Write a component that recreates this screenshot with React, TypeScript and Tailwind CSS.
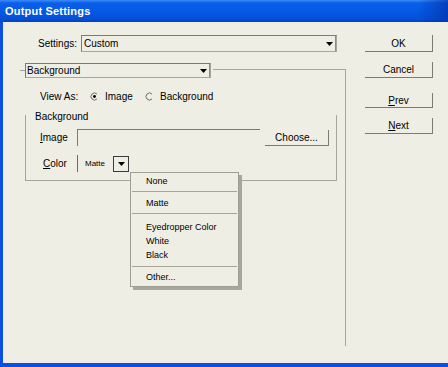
import React from "react";

const F = { fontFamily: '"Liberation Sans", Arial, sans-serif' };

function Tri() {
  return (
    <svg width="7" height="4" viewBox="0 0 7 4" className="block">
      <path d="M0 0 H7 L3.5 4 Z" fill="#000" />
    </svg>
  );
}

function Radio({ on }: { on?: boolean }) {
  return (
    <svg width="9" height="9" viewBox="0 0 9 9" className="block shrink-0">
      <path d="M6.97 2.03 A3.5 3.5 0 1 0 6.97 6.97" fill="none" stroke="#6b6b6b" strokeWidth="1" />
      {on && <circle cx="4.5" cy="4.5" r="1.4" fill="#000" />}
    </svg>
  );
}

function Btn({ children, cls }: { children: React.ReactNode; cls: string }) {
  return (
    <div className={`flex items-center justify-center border-r border-b border-[#7d7b71] text-[10px] text-black ${cls}`}>
      {children}
    </div>
  );
}

function MenuItem({ children, cls }: { children: React.ReactNode; cls?: string }) {
  return <div className={`h-[14px] leading-[14px] pl-[15px] text-[9px] text-black ${cls ?? ""}`}>{children}</div>;
}

function Sep({ cls }: { cls: string }) {
  return <div className={`mx-[1px] h-px bg-[#a7a597] ${cls}`} />;
}

export default function App() {
  return (
    <div className="relative w-[448px] h-[367px] overflow-hidden bg-[#efeee5] flex flex-col" style={F}>
      {/* title bar */}
      <div className="h-[22px] shrink-0 flex items-center pl-[5px] bg-[linear-gradient(to_bottom,#3d8cf9_0px,#0a5fe9_3px,#0558e3_12px,#0450d8_19px,#0340b8_22px)]">
        <div className="relative w-full h-full flex items-center">
          <span className="text-[11px] font-bold text-white tracking-[0.2px]">Output Settings</span>
          <div className="absolute right-0 top-0 h-full w-[30px] bg-[linear-gradient(to_right,rgba(3,50,170,0),rgba(3,50,170,0.7))]" />
        </div>
      </div>
      {/* body */}
      <div className="flex-1 flex flex-col border-l-[3px] border-[#0a4fe0]">
        <div className="flex-1 flex">
          {/* left column */}
          <div className="w-[343px] shrink-0 pt-[13px] flex flex-col">
            {/* settings */}
            <div className="flex h-[17px] items-center">
              <div className="w-[78px] pr-[4px] text-right text-[10px] text-black">Settings:</div>
              <div className="w-[256px] h-[17px] flex items-center border-l border-t border-[#7a7a7a] border-r border-b border-r-[#a8a69a] border-b-[#a8a69a]">
                <span className="flex-1 pl-[2px] text-[10px] text-black">Custom</span>
                <div className="w-[12px] h-full flex items-center justify-center border-r border-[#8e8c82]">
                  <Tri />
                </div>
              </div>
            </div>
            {/* outer group */}
            <div className="mt-[11px] ml-[17px] w-[326px] flex flex-col">
              <div className="flex h-[15px]">
                <div className="w-[5px] mt-[7px] border-t border-[#a7a597]" />
                <div className="w-[186px] h-[15px] flex items-center border-l border-t border-[#7a7a7a] border-r border-b border-r-[#a8a69a] border-b-[#a8a69a]">
                  <span className="flex-1 pl-[1px] text-[10px] text-black leading-[13px]">Background</span>
                  <div className="w-[12px] h-full flex items-center justify-center border-r border-[#8e8c82]">
                    <Tri />
                  </div>
                </div>
                <div className="flex-1 ml-[2px] mt-[6px] border-t border-r border-[#a7a597]" />
              </div>
              <div className="h-[268px] border-r border-[#a7a597] flex flex-col">
                {/* view as */}
                <div className="mt-[11px] h-[14px] flex items-center pl-[20px] text-[10px] text-black">
                  <span className="w-[50px]">View As:</span>
                  <Radio on />
                  <span className="ml-[6px] w-[40px]">Image</span>
                  <Radio />
                  <span className="ml-[6px]">Background</span>
                </div>
                {/* inner group */}
                <div className="mt-[12px] ml-[5px] w-[312px] border-l border-r border-b border-[#a7a597] pb-[8px]">
                  <div className="-mt-[4px] h-[12px] leading-[12px] pl-[9px] text-[10px] text-black">Background</div>
                  <div className="mt-[6px] h-[17px] flex items-center pl-[14px]">
                    <span className="w-[37px] text-[10px] text-black">
                      <span className="underline">I</span>mage
                    </span>
                    <div className="w-[183px] h-[17px] border-l border-t border-[#7a7a7a]" />
                    <Btn cls="ml-[5px] w-[64px] h-[16px]">Choose...</Btn>
                  </div>
                  <div className="mt-[9px] h-[17px] flex items-center pl-[14px]">
                    <span className="w-[37px] pl-[3px] text-[10px] text-black">
                      <span className="underline">C</span>olor
                    </span>
                    <div className="w-[52px] h-[17px] flex items-center">
                      <div className="flex-1 h-full border-l border-[#6a6a6a] flex items-center pl-[7px] text-[8px] text-black">Matte</div>
                      <div className="w-[16px] h-[16px] border border-[#3c3c3c] flex items-center justify-center bg-[#efeee5]">
                        <Tri />
                      </div>
                    </div>
                  </div>
                </div>
              </div>
            </div>
          </div>
          {/* right column */}
          <div className="ml-[19px] w-[68px] pt-[13px] flex flex-col">
            <Btn cls="h-[17px]">OK</Btn>
            <Btn cls="mt-[10px] h-[16px]">Cancel</Btn>
            <Btn cls="mt-[15px] h-[15px]">
              <span>
                <span className="underline">P</span>rev
              </span>
            </Btn>
            <Btn cls="mt-[10px] h-[16px]">
              <span>
                <span className="underline">N</span>ext
              </span>
            </Btn>
          </div>
        </div>
        <div className="h-[4px] shrink-0 bg-[#0a4fe0] -ml-[3px]" />
      </div>
      {/* popup menu */}
      <div className="absolute left-[130px] top-[172px] w-[109px] h-[115px] border border-[#a09e92] bg-[#efeee5] shadow-[3px_3px_0_#a9a79b] pt-[1px]">
        <MenuItem>None</MenuItem>
        <Sep cls="mt-[3px]" />
        <MenuItem cls="mt-[4px]">Matte</MenuItem>
        <Sep cls="mt-[3px]" />
        <MenuItem cls="mt-[6px]">Eyedropper Color</MenuItem>
        <MenuItem>White</MenuItem>
        <MenuItem>Black</MenuItem>
        <Sep cls="mt-[4px]" />
        <MenuItem cls="mt-[3px]">Other...</MenuItem>
      </div>
    </div>
  );
}
